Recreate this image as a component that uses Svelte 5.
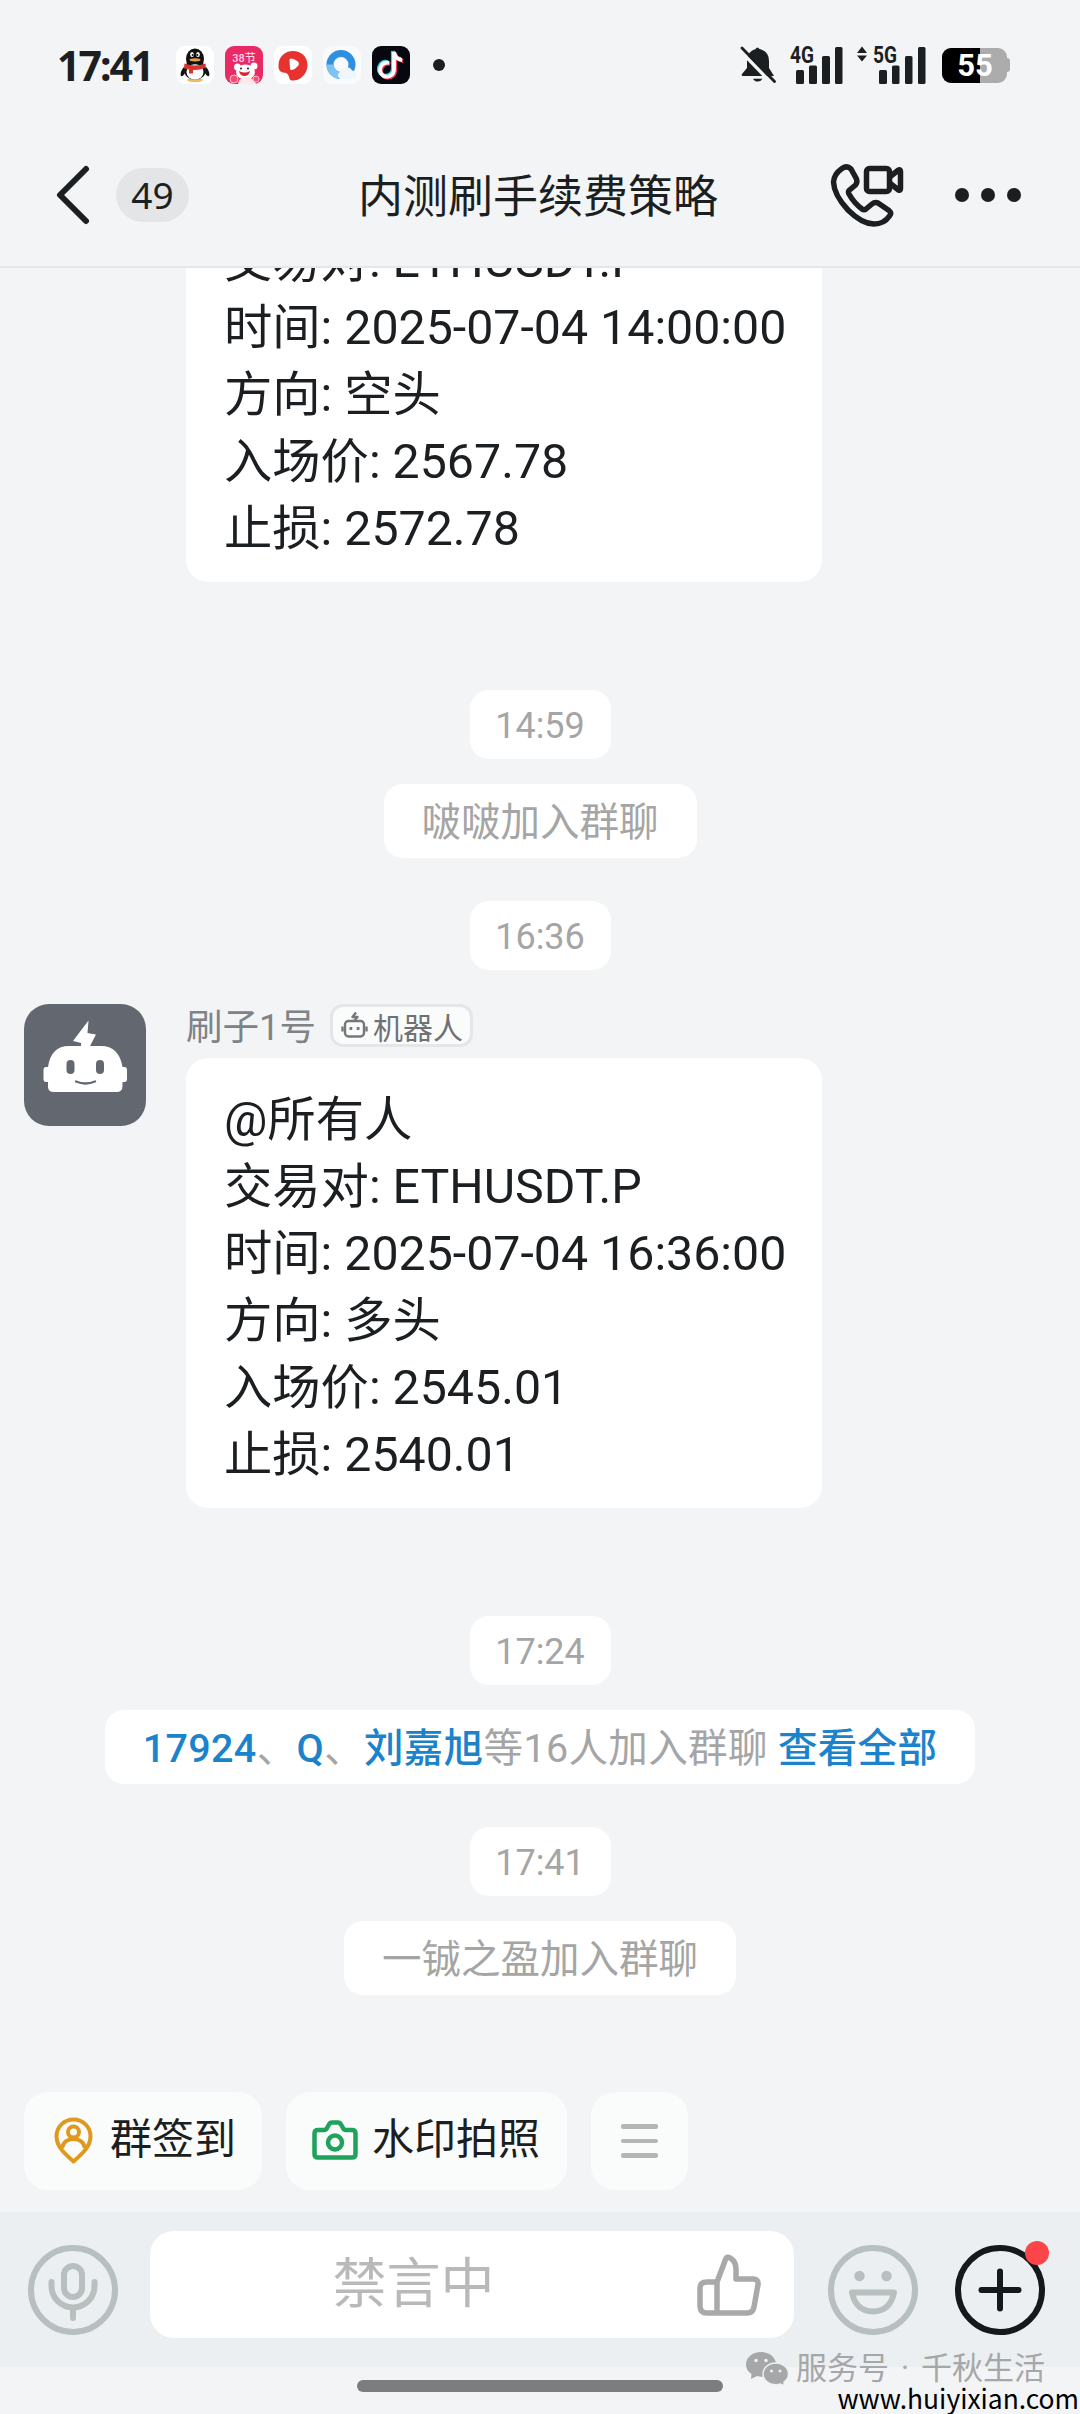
<!-- App.svelte -->
<script lang="ts">
    interface Part {
        text: string;
        link?: boolean;
    }

    interface Message {
        kind: 'bot' | 'time' | 'notice';
        lines?: string[];
        parts?: Part[];
        text?: string;
    }

    const title = '内测刷手续费策略';
    const unread = 49;
    const battery = 55;

    const messages: Message[] = [
        {
            kind: 'bot',
            lines: [
                '@所有人',
                '交易对: ETHUSDT.P',
                '时间: 2025-07-04 14:00:00',
                '方向: 空头',
                '入场价: 2567.78',
                '止损: 2572.78'
            ]
        },
        { kind: 'time', text: '14:59' },
        { kind: 'notice', parts: [{ text: '啵啵加入群聊' }] },
        { kind: 'time', text: '16:36' },
        {
            kind: 'bot',
            lines: [
                '@所有人',
                '交易对: ETHUSDT.P',
                '时间: 2025-07-04 16:36:00',
                '方向: 多头',
                '入场价: 2545.01',
                '止损: 2540.01'
            ]
        },
        { kind: 'time', text: '17:24' },
        {
            kind: 'notice',
            parts: [
                { text: '17924', link: true },
                { text: '、' },
                { text: 'Q', link: true },
                { text: '、' },
                { text: '刘嘉旭', link: true },
                { text: '等16人加入群聊 ' },
                { text: '查看全部', link: true }
            ]
        },
        { kind: 'time', text: '17:41' },
        { kind: 'notice', parts: [{ text: '一铖之盈加入群聊' }] }
    ];
</script>

<div class="phone">
    <div class="status">
        <span class="clock">17:41</span>
        <div class="apps">
            <!-- QQ -->
            <svg width="38" height="38" viewBox="0 0 38 38">
                <rect width="38" height="38" rx="9" fill="#fff" />
                <ellipse cx="19" cy="34" rx="8" ry="2" fill="#f3b95a" />
                <path d="M8 21c-3 3-4 7-3 9 1 1 3-1 4-3zM30 21c3 3 4 7 3 9-1 1-3-1-4-3z" fill="#111" />
                <ellipse cx="19" cy="24" rx="11" ry="10" fill="#111" />
                <ellipse cx="19" cy="13" rx="9" ry="10.500" fill="#111" />
                <ellipse cx="19" cy="26" rx="8.500" ry="7.800" fill="#fff" />
                <ellipse cx="16" cy="8.500" rx="1.800" ry="2.600" fill="#fff" />
                <ellipse cx="22" cy="8.500" rx="1.800" ry="2.600" fill="#fff" />
                <circle cx="16.600" cy="9" r="1" fill="#111" />
                <circle cx="21.400" cy="9" r="1" fill="#111" />
                <ellipse cx="19" cy="13.800" rx="5.500" ry="1.600" fill="#e5a548" />
                <path d="M8.500 17.500q10.500 4 21 0l.500 4q-7 3-13 2.500v3.500h-4v-4q-3-.500-5-1.500z" fill="#d6342f" />
            </svg>
            <!-- festival shopping app -->
            <svg width="38" height="38" viewBox="0 0 38 38">
                <rect width="38" height="38" rx="9" fill="#ea2a64" />
                <text x="19" y="15.500" class="fest" text-anchor="middle">38节</text>
                <circle cx="12.500" cy="21" r="3.500" fill="#fff" />
                <circle cx="29" cy="20" r="3.500" fill="#fff" />
                <ellipse cx="20.500" cy="26" rx="9.500" ry="7.500" fill="#fff" />
                <path d="M13 38q1-7 8-7t10 7z" fill="#ffe7ec" />
                <path d="M14 25q6 3 11 0-1 5-5.500 5T14 25z" fill="#d8262f" />
                <circle cx="16" cy="22.500" r="1" fill="#222" />
                <circle cx="23" cy="22.500" r="1" fill="#222" />
                <circle cx="9" cy="33" r="4" fill="#f04f70" stroke="#ffc4cf" />
                <circle cx="31" cy="33" r="3" fill="#f04f70" stroke="#ffc4cf" />
            </svg>
            <!-- video player -->
            <svg width="38" height="38" viewBox="0 0 38 38">
                <rect width="38" height="38" rx="9" fill="#fff" />
                <path d="M19 5c8 0 14.500 5.500 14.500 14 0 8-6 15-13.500 15.500-4 .300-4.500-1-5-3.500-1-4-3-4-6-4.500-4-1-4.500-4-4.500-7C4.500 10.500 11 5 19 5z" fill="#e8322f" />
                <path d="M15.500 14q-.500-1.500 1.500-1.500 3 0 6.500 2.800 2.500 2.200.500 4.700-2.500 3-6 4-2 .500-2-1.500z" fill="#fff" />
            </svg>
            <!-- browser -->
            <svg width="38" height="38" viewBox="0 0 38 38">
                <rect width="38" height="38" rx="9" fill="#f8fafc" />
                <circle cx="18" cy="18.500" r="11" fill="none" stroke="#2f8fe0" stroke-width="7" />
                <path d="M7 18.500a11 11 0 0 0 9 11" fill="none" stroke="#7fc3f3" stroke-width="7" />
                <path d="M17 33a4 4 0 0 1 1-7.500 6 6 0 0 1 11-1 4.600 4.600 0 0 1 2 8.500z" fill="#eef7fe" />
            </svg>
            <!-- short video -->
            <svg width="38" height="38" viewBox="0 0 38 38">
                <rect width="38" height="38" rx="9" fill="#07080f" />
                <g fill="none" stroke-width="3.800">
                    <path d="M17 17a7 7 0 1 0 5 7V6q1 7 8 8" stroke="#35d7dc" transform="translate(-1.200 -1)" />
                    <path d="M17 17a7 7 0 1 0 5 7V6q1 7 8 8" stroke="#f03b5d" transform="translate(1.200 1)" />
                    <path d="M17 17a7 7 0 1 0 5 7V6q1 7 8 8" stroke="#fff" />
                </g>
            </svg>
        </div>
        <i class="more-dot"></i>
        <div class="signals">
            <svg width="37" height="38" viewBox="0 0 37 38" fill="#1c1f21">
                <path d="M15.500 3Q17.500 0 19.500 3 29 5.500 29 15v7l5 8H3q-2 0-1-2l5-6v-7Q7 5.500 15.500 3z" />
                <path d="M13 32.800h9.500q-1.500 2.800-4.800 2.800T13 32.800z" />
                <path d="M-2 2.500l33 34" stroke="#f2f4f6" stroke-width="3.500" />
                <path d="M1 1L7 1 7 8z" fill="#f2f4f6" />
                <path d="M2 2l32.500 33.500" stroke="#1c1f21" stroke-width="2.800" stroke-linecap="round" />
            </svg>
            <svg class="bars first" width="54" height="38" viewBox="0 0 54 38" fill="#1c1f21">
                <text x="0" y="17" textLength="24" lengthAdjust="spacingAndGlyphs">4G</text>
                <rect x="6" y="24" width="8" height="14" rx="1.500" />
                <rect x="19" y="19.500" width="8" height="18.500" rx="1.500" />
                <rect x="32" y="10" width="8" height="28" rx="1.500" />
                <rect x="45" y="1" width="7.500" height="37" rx="1.500" />
            </svg>
            <svg class="bars" width="69" height="38" viewBox="0 0 69 38" fill="#1c1f21">
                <path d="M0 7l5-6.500L10 7zM0 9.500h10l-5 6z" />
                <text x="16" y="17" textLength="24" lengthAdjust="spacingAndGlyphs">5G</text>
                <rect x="22" y="24" width="8" height="14" rx="1.500" />
                <rect x="35" y="19.500" width="7.500" height="18.500" rx="1.500" />
                <rect x="48" y="10" width="7.500" height="28" rx="1.500" />
                <rect x="61" y="1" width="7.500" height="37" rx="1.500" />
            </svg>
            <div class="battery">
                <div class="cell">
                    <div class="level" style="width: {battery + 4}%"></div>
                    <span>{battery}</span>
                </div>
                <i class="nub"></i>
            </div>
        </div>
    </div>

    <header class="header">
        <div class="side">
            <svg class="back" width="34" height="60" viewBox="0 0 34 60">
                <path d="M30 4L4 30l26 26" fill="none" stroke="#1c1f21" stroke-width="6" stroke-linecap="round" stroke-linejoin="round" />
            </svg>
            <span class="unread">{unread}</span>
        </div>
        <h1>{title}</h1>
        <div class="side right">
            <svg width="74" height="64" viewBox="0 0 74 64" fill="none" stroke="#1c1f21" stroke-width="5.500" stroke-linejoin="round">
                <path d="M12 5.500Q17 2 21 6L26 15Q28 19 25.500 22L19 27.500Q18 29 19 31Q24 40 32 46Q34 47.500 36 46L42 41Q45 38.500 48 40L59 47.500Q62 50 59.500 53Q54 61 44 61Q32 61 18 47Q4 32 3.500 19Q4 11 12 5.500Z" />
                <rect x="36.500" y="5.500" width="23" height="23" rx="3" />
                <path d="M59 14.500l9.500-7.500q2-1 2 1.500V25.500q0 2.500-2 1.500l-9.500-7.500" />
            </svg>
            <div class="dots"><i></i><i></i><i></i></div>
        </div>
    </header>

    <main class="chat">
        {#each messages as message}
            {#if message.kind === 'bot'}
                <div class="message">
                    <svg class="avatar" width="122" height="122" viewBox="0 0 122 122">
                        <rect width="122" height="122" rx="25" fill="#636870" />
                        <path d="M64.500 16.500L49 37l8 2v4h8.500L72 30.500l-8.500-1.500z" fill="#fff" />
                        <path d="M24 83v-5h-2q-2.500 0-2.500-3V66q0-3 2.500-3h2Q27 42 45 42h32q18 0 21.500 21h2q2.500 0 2.500 3v9q0 3-2.500 3h-2v4q0 6-6 6H30q-6 0-6-5z" fill="#fff" />
                        <rect x="42.500" y="56" width="8" height="14" rx="4" fill="#636870" />
                        <rect x="72" y="56" width="8" height="14" rx="4" fill="#636870" />
                        <path d="M52 77.500q9.500 4 19 0" fill="none" stroke="#636870" stroke-width="2.400" stroke-linecap="round" />
                    </svg>
                    <div class="body">
                        <div class="sender">
                            <span class="name">刷子1号</span>
                            <span class="tag">
                                <svg width="27" height="27" viewBox="0 0 27 27" fill="none" stroke="#75787b" stroke-width="2.400">
                                    <rect x="4" y="9" width="19" height="15.500" rx="3.500" />
                                    <path d="M1.500 14.500v5M25.500 14.500v5M15 .500l-3.500 4.500h5L13 9" stroke-linejoin="round" />
                                    <path d="M8.500 16.500h2.800M15.700 16.500h2.800" stroke-width="2.800" />
                                </svg>
                                机器人
                            </span>
                        </div>
                        <div class="bubble">
                            {#each message.lines ?? [] as line}
                                <p>{line}</p>
                            {/each}
                        </div>
                    </div>
                </div>
            {:else if message.kind === 'time'}
                <div class="chip time">{message.text}</div>
            {:else}
                <div class="chip notice" class:multi={(message.parts ?? []).length > 1}>
                    {#each message.parts ?? [] as part}<span class:link={part.link}>{part.text}</span>{/each}
                </div>
            {/if}
        {/each}
    </main>

    <div class="shortcuts">
        <button class="shortcut pin">
            <svg width="39" height="47" viewBox="0 0 39 47" fill="none" stroke="#e0991f" stroke-width="4" stroke-linejoin="round">
                <path d="M19.500 2.500C10 2.500 2.500 10 2.500 19.500c0 10 8 17 17 25 9-8 17-15 17-25 0-9.500-7.500-17-17-17z" />
                <circle cx="19.500" cy="15" r="5.500" />
                <path d="M8 31q2-9 11.500-9T31 31" />
            </svg>
            群签到
        </button>
        <button class="shortcut camera">
            <svg width="46" height="40" viewBox="0 0 46 40" fill="none" stroke="#1fa35b" stroke-width="4.500" stroke-linejoin="round">
                <path d="M6 10h6q2 0 3-2l2-3.500q1-2 3-2h6q2 0 3 2L31 8q1 2 3 2h6q3.500 0 3.500 3.500V34q0 3.500-3.500 3.500H6q-3.500 0-3.500-3.500V13.500Q2.500 10 6 10z" />
                <circle cx="23" cy="22.500" r="7" />
            </svg>
            水印拍照
        </button>
        <button class="shortcut menu" aria-label="更多">
            <i></i><i></i><i></i>
        </button>
    </div>

    <footer class="composer">
        <svg width="90" height="90" viewBox="0 0 90 90" fill="none" stroke="#b8bfbf" stroke-width="6" stroke-linecap="round">
            <circle cx="45" cy="45" r="42" />
            <rect x="36" y="21" width="18" height="31" rx="9" />
            <path d="M23.500 37v4a21.500 21.500 0 0 0 43 0v-4M45 64v9" />
        </svg>
        <div class="input">
            <span>禁言中</span>
            <svg width="64" height="62" viewBox="0 0 64 62" fill="none" stroke="#a9a9a9" stroke-width="5.500" stroke-linejoin="round">
                <path d="M20 28L28.500 5.500Q30 1.500 34 4.500Q39 8 39 15V25H56Q61.500 25 61 30.500L57 53Q56 59 50 59H10Q3 59 3 52V34Q3 28 10 28H20V59" />
            </svg>
        </div>
        <svg class="smile" width="90" height="90" viewBox="0 0 90 90" fill="none" stroke="#b8bfbf" stroke-width="6">
            <circle cx="45" cy="45" r="42" />
            <circle cx="31.500" cy="31" r="5.200" fill="#b8bfbf" stroke="none" />
            <circle cx="58.500" cy="31" r="5.200" fill="#b8bfbf" stroke="none" />
            <path d="M24 47.500h42Q62 66.500 45 66.500T24 47.500z" stroke-linejoin="round" />
        </svg>
        <div class="add">
            <svg width="90" height="90" viewBox="0 0 90 90" fill="none" stroke="#14191b" stroke-width="6" stroke-linecap="round">
                <circle cx="45" cy="45" r="42" />
                <path d="M45 26.500v37M26.500 45h37" />
            </svg>
            <i class="badge"></i>
        </div>
    </footer>

    <div class="home"><i></i></div>

    <div class="watermark">
        <svg width="43" height="34" viewBox="0 0 43 34">
            <g fill="#a5a7a8">
                <path d="M15 0C6.500 0 0 5.500 0 12.500q0 6 5.500 9.500L5 27l6-3q2 .700 5 .700Q30 24 30 12.500C30 5.500 23.500 0 15 0z" />
                <path d="M30 11C22.500 11 17 16 17 22s5.500 10.800 13 10.800q2.500 0 4.500-.800l4 2-.500-4q4.500-3 4.500-8c0-6-5.500-11-12.500-11z" stroke="#eef1f2" stroke-width="1.500" />
            </g>
            <g fill="#eef1f2">
                <circle cx="10" cy="8.500" r="1.800" />
                <circle cx="20" cy="8.500" r="1.800" />
                <circle cx="25.500" cy="19" r="1.500" />
                <circle cx="34" cy="19" r="1.500" />
            </g>
        </svg>
        <span>服务号</span><span class="sep">·</span><span>千秋生活</span>
    </div>
    <div class="site">www.huiyixian.com</div>
</div>

<style>
    :global(body) {
        background: #f2f4f6;
    }

    .phone {
        position: relative;
        display: flex;
        flex-direction: column;
        box-sizing: border-box;
        width: 1080px;
        height: 2414px;
        overflow: hidden;
        background: #f2f4f6;
        color: #1c1f21;
        font-family: Roboto, 'Noto Sans CJK SC', sans-serif;
    }

    svg {
        display: block;
        flex: none;
    }

    i {
        display: block;
    }

    /* status bar */
    .status {
        display: flex;
        align-items: center;
        flex: none;
        height: 130px;
        padding: 0 70px 0 57px;
    }

    .clock {
        width: 119px;
        font: 700 41px/56px 'Noto Sans', sans-serif;
        letter-spacing: -2px;
    }

    .apps {
        display: flex;
        gap: 11px;
    }

    .fest {
        font: 500 11px Roboto, 'Noto Sans CJK SC', sans-serif;
        fill: #ffd0f0;
    }

    .more-dot {
        width: 12px;
        height: 12px;
        margin-left: 23px;
        border-radius: 50%;
        background: #1c1f21;
    }

    .signals {
        display: flex;
        align-items: center;
        margin-left: auto;
    }

    .bars {
        margin-left: 13px;
        overflow: visible;
        font: 700 23px Roboto, sans-serif;
    }

    .battery {
        display: flex;
        align-items: center;
        margin-left: 16px;
    }

    .cell {
        position: relative;
        width: 65px;
        height: 35px;
        border-radius: 9px;
        overflow: hidden;
        background: #acacac;
    }

    .level {
        height: 100%;
        background: #000;
    }

    .cell span {
        position: absolute;
        inset: 0;
        padding-left: 1px;
        color: #fff;
        font: 700 31px/36px Roboto, sans-serif;
        text-align: center;
    }

    .nub {
        width: 3px;
        height: 14px;
        border-radius: 0 3px 3px 0;
        background: #acacac;
    }

    /* header */
    .header {
        display: flex;
        align-items: center;
        flex: none;
        box-sizing: border-box;
        height: 138px;
        padding: 0 56px 6px;
        border-bottom: 2px solid #e4e6e8;
    }

    .side {
        display: flex;
        align-items: center;
        flex: 1;
    }

    .right {
        justify-content: flex-end;
    }

    .unread {
        width: 73px;
        margin-left: 26px;
        border-radius: 27px;
        background: #e3e5e7;
        font: 400 37px/54px 'Noto Sans', sans-serif;
        text-align: center;
    }

    h1 {
        margin: 0 4px 0 0;
        padding-top: 6px;
        font-size: 45px;
        font-weight: 400;
        line-height: 60px;
    }

    .dots {
        display: flex;
        gap: 12px;
        margin: 0 3px 0 51px;
    }

    .dots i {
        width: 14px;
        height: 14px;
        border-radius: 50%;
        background: #1c1f21;
    }

    /* conversation, pinned to the newest message */
    .chat {
        display: flex;
        flex: 1;
        flex-direction: column;
        align-items: center;
        justify-content: flex-end;
        min-height: 0;
        overflow: hidden;
    }

    .message {
        display: flex;
        align-self: stretch;
        gap: 40px;
        flex: none;
        padding-left: 24px;
        margin: 34px 0 108px;
    }

    .sender {
        display: flex;
        align-items: center;
        height: 43px;
        margin-bottom: 11px;
        color: #808386;
    }

    .name {
        width: 144px;
        padding-top: 4px;
        font-size: 36.500px;
        line-height: 43px;
    }

    .tag {
        display: flex;
        align-items: center;
        gap: 5px;
        box-sizing: border-box;
        width: 143px;
        height: 43px;
        padding: 0 8px;
        border: 3px solid #e4e6e8;
        border-radius: 13px;
        background: #fafbfb;
        color: #6f7274;
        font-size: 30px;
        white-space: nowrap;
    }

    .bubble {
        box-sizing: border-box;
        width: 636px;
        padding: 28px 38px 20px;
        border-radius: 22px;
        background: #fff;
    }

    .bubble p {
        margin: 0;
        font-size: 48.300px;
        line-height: 67px;
        white-space: nowrap;
    }

    .chip {
        flex: none;
        box-sizing: border-box;
        border-radius: 19px;
        background: #fff;
        color: #a5a5a5;
        text-align: center;
        white-space: pre;
    }

    .time {
        width: 141px;
        height: 69px;
        margin-bottom: 25px;
        font-size: 36px;
        line-height: 72px;
    }

    .notice {
        height: 74px;
        padding: 0 38px;
        margin-bottom: 43px;
        font-size: 39.500px;
        line-height: 78px;
    }

    .multi {
        letter-spacing: 0.350px;
    }

    .chip.time:has(+ .message) {
        margin-bottom: 0;
    }

    .notice:last-child {
        margin-bottom: 97px;
    }

    .link {
        color: #1b83cc;
        font-weight: 500;
    }

    /* shortcuts */
    .shortcuts {
        display: flex;
        flex: none;
        gap: 24px;
        padding: 0 24px 22px;
    }

    .shortcut {
        display: flex;
        align-items: center;
        box-sizing: border-box;
        height: 98px;
        padding: 0 0 2px 30px;
        border: none;
        border-radius: 24px;
        background: #fafbfb;
        color: #1c1f21;
        font-family: inherit;
        font-size: 42px;
        line-height: 56px;
    }

    .pin {
        gap: 17px;
        width: 238px;
    }

    .camera {
        gap: 14px;
        width: 281px;
        padding-left: 26px;
    }

    .menu {
        flex-direction: column;
        justify-content: center;
        gap: 10px;
        width: 97px;
        padding: 0;
    }

    .menu i {
        width: 37px;
        height: 4.500px;
        border-radius: 2px;
        background: #b5b5b5;
    }

    /* composer */
    .composer {
        display: flex;
        align-items: center;
        flex: none;
        box-sizing: border-box;
        height: 155px;
        padding: 0 35px 0 28px;
        background: #ebeff1;
    }

    .input {
        display: flex;
        align-items: center;
        box-sizing: border-box;
        width: 644px;
        height: 107px;
        margin: 0 34px 10px 32px;
        padding-right: 33px;
        border-radius: 24px;
        background: #fff;
        color: #b9b9b9;
        font-size: 54px;
    }

    .input span {
        flex: 1;
        padding-right: 20px;
        line-height: 80px;
        text-align: center;
    }

    .add {
        position: relative;
        margin-left: 37px;
    }

    .badge {
        position: absolute;
        top: -4px;
        right: -4px;
        width: 24px;
        height: 24px;
        border-radius: 50%;
        background: #fb4548;
    }

    .home {
        display: flex;
        justify-content: center;
        flex: none;
        height: 34px;
        padding-top: 13px;
    }

    .home i {
        width: 366px;
        height: 12px;
        border-radius: 6px;
        background: #7b7d7f;
    }

    /* marks stamped over the corner */
    .watermark {
        position: absolute;
        right: 35px;
        bottom: 22px;
        display: flex;
        align-items: center;
        height: 46px;
        color: #a5a7a8;
        font-size: 31px;
        line-height: 36px;
    }

    .watermark svg {
        margin-right: 7px;
    }

    .sep {
        width: 32px;
        text-align: center;
    }

    .site {
        position: absolute;
        right: 1px;
        bottom: 0;
        color: #000;
        font: 400 26.400px/32px 'Noto Sans CJK SC', sans-serif;
    }
</style>
